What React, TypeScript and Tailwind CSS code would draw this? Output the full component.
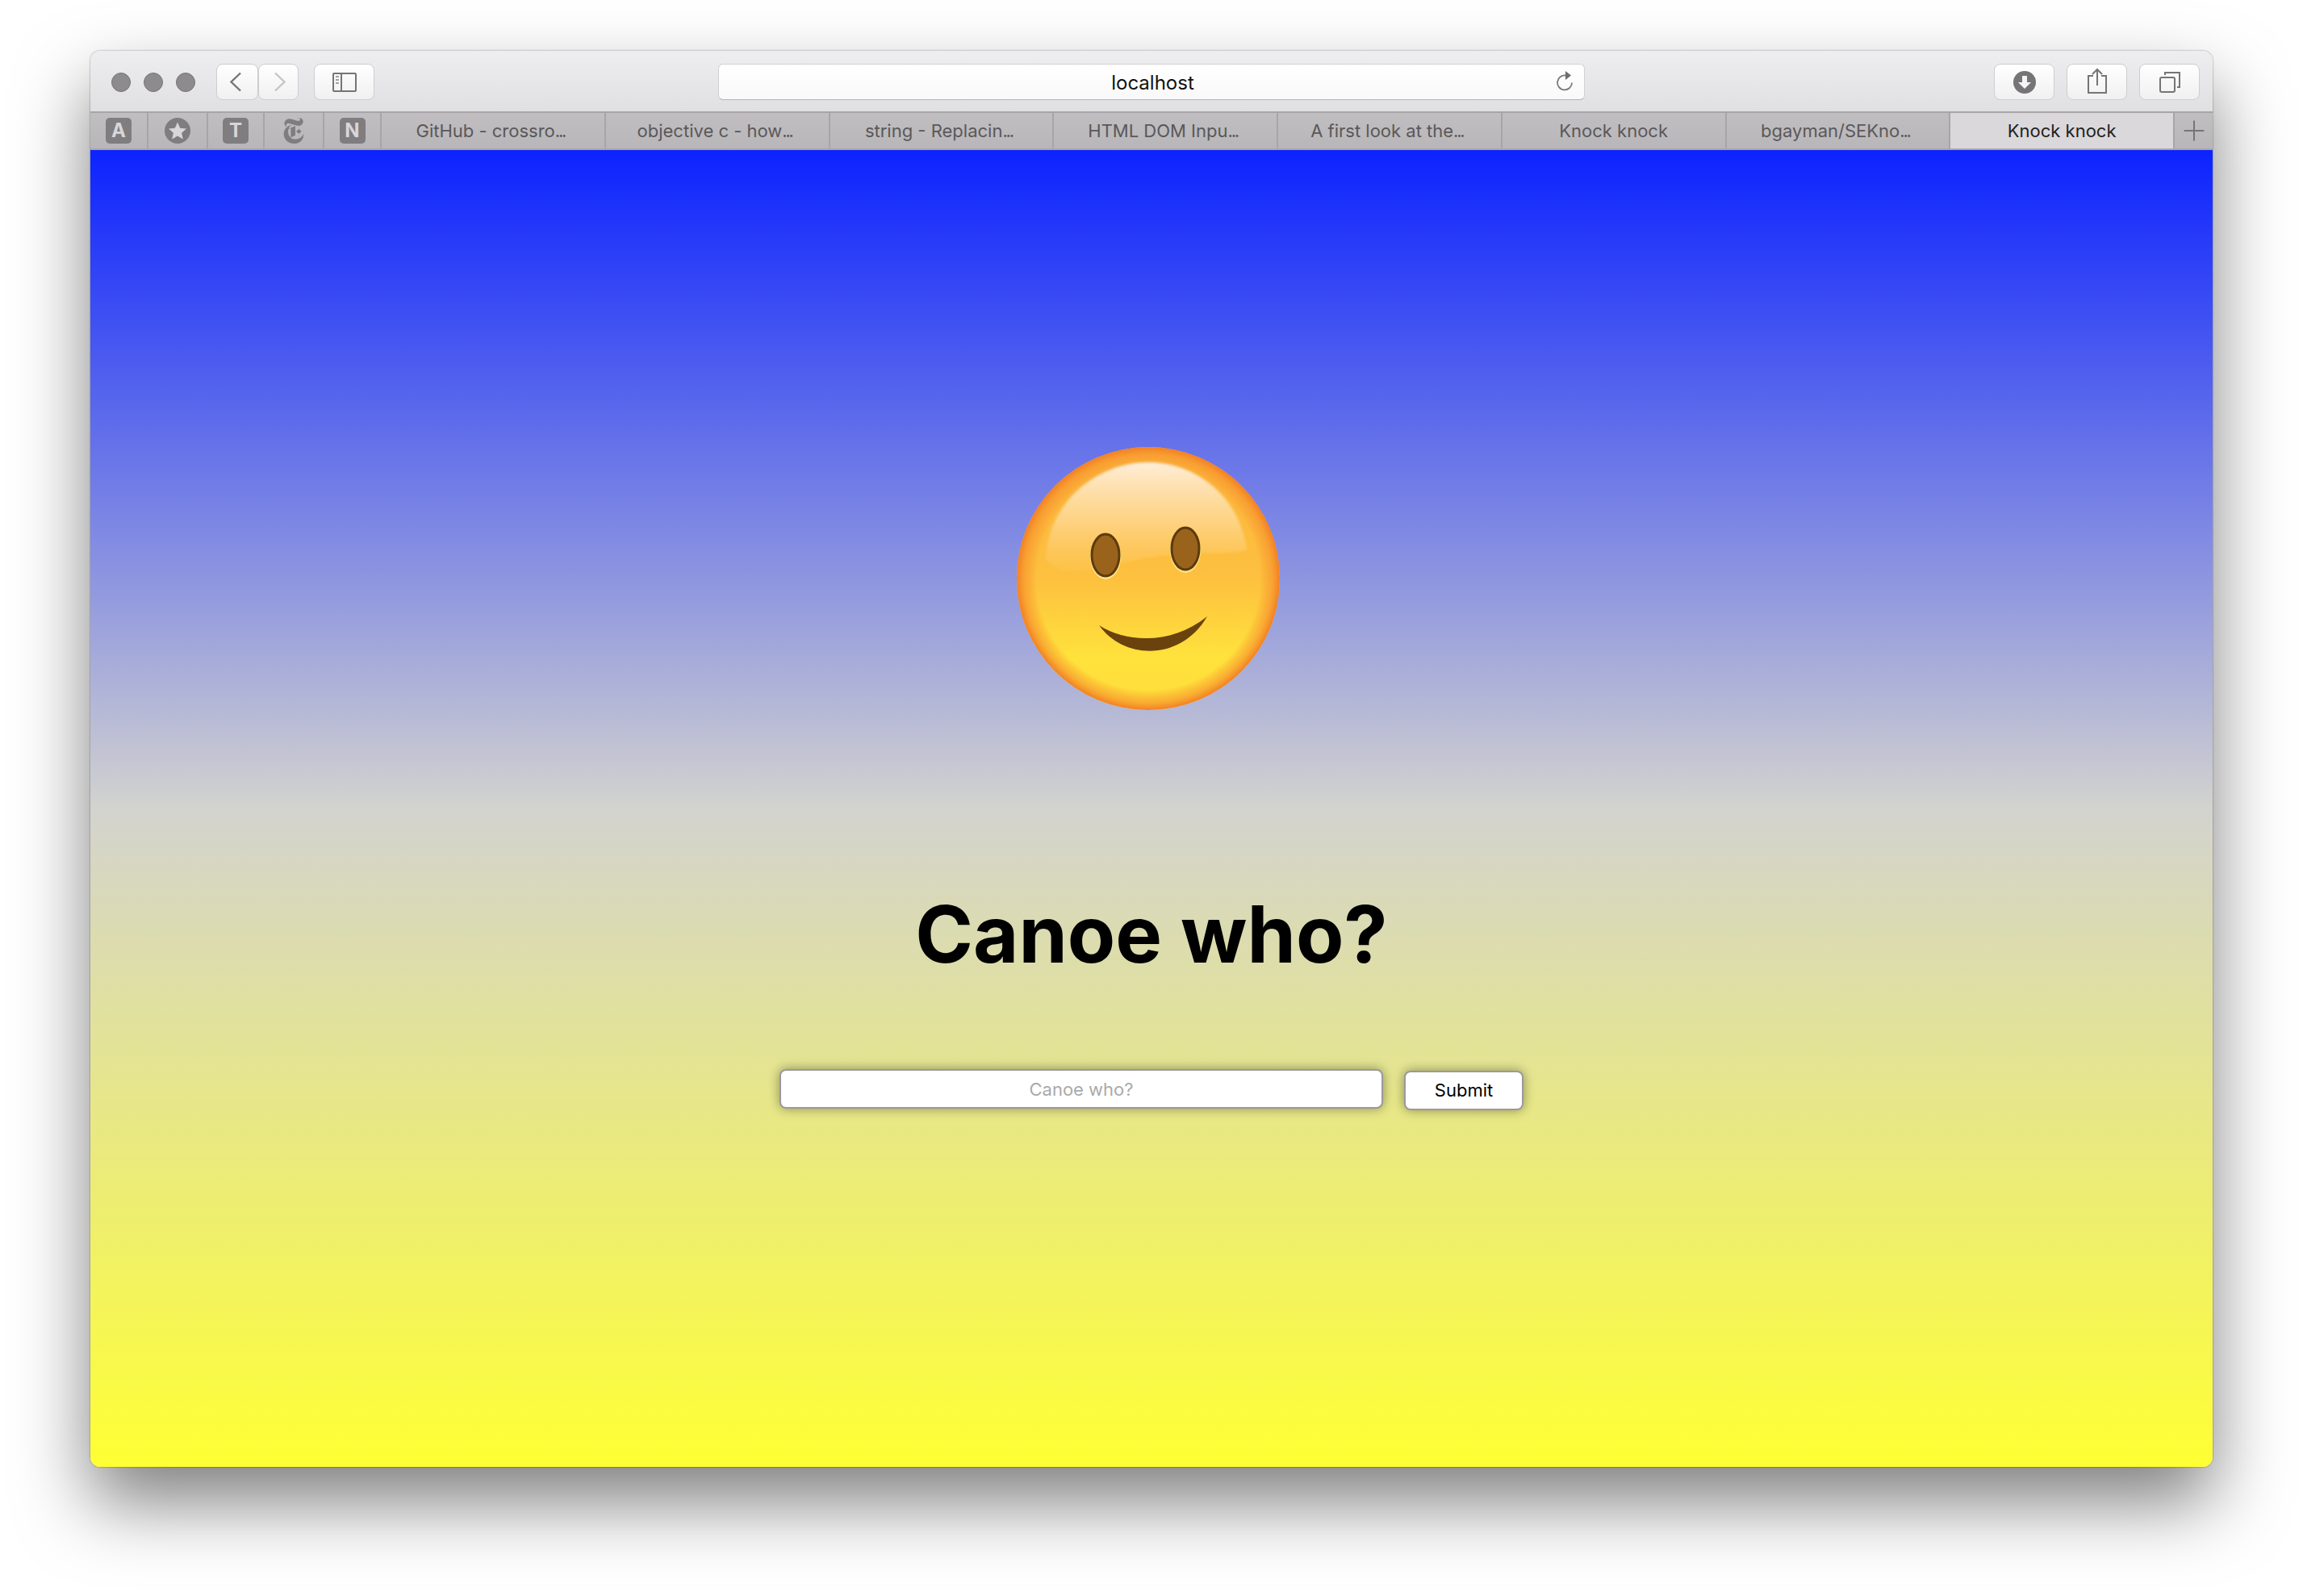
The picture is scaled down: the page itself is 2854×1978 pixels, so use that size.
import { Plus } from 'lucide-react'
import { SiNewyorktimes } from 'react-icons/si'

const tabs = [
  'GitHub - crossro',
  'objective c - how',
  'string - Replacin',
  'HTML DOM Inpu',
  'A first look at the',
  'bgayman/SEKno',
]

function SquareIcon({ letter }: { letter: string }) {
  return (
    <div className="flex h-8 w-8 items-center justify-center rounded-[5px] bg-[#7f7d7f] text-[24px] font-bold text-[#d8d6d8]">
      {letter}
    </div>
  )
}

function ToolButton({ children }: { children: React.ReactNode }) {
  return (
    <div className="flex h-[45px] w-[75px] items-center justify-center rounded-[8px] border border-[#cfcdcf] bg-gradient-to-b from-white to-[#f1f0f1]">
      {children}
    </div>
  )
}

function TitledTab({ title }: { title: string }) {
  return (
    <div className="flex h-full flex-1 items-center justify-center border-r-2 border-[#a7a5a7]">
      <span className="mr-[6px]">
        {title}
        <span className="tracking-[-2.2px]">...</span>
      </span>
    </div>
  )
}

function Smiley() {
  return (
    <svg width="328" height="328" viewBox="0 0 328 328">
      <defs>
        <linearGradient id="face" x1="0" y1="0" x2="0" y2="1">
          <stop offset="0%" stopColor="#fbb53c" />
          <stop offset="50%" stopColor="#fdc03f" />
          <stop offset="80%" stopColor="#ffe23c" />
          <stop offset="100%" stopColor="#ffdc3a" />
        </linearGradient>
        <radialGradient id="rim" cx="50%" cy="50%" r="50%">
          <stop offset="85%" stopColor="#f58426" stopOpacity="0" />
          <stop offset="94%" stopColor="#f6902c" stopOpacity="0.6" />
          <stop offset="100%" stopColor="#f27f24" />
        </radialGradient>
        <linearGradient id="shine" x1="0" y1="0" x2="0" y2="1">
          <stop offset="0%" stopColor="#fff1e0" stopOpacity="0.95" />
          <stop offset="55%" stopColor="#ffe2b0" stopOpacity="0.6" />
          <stop offset="100%" stopColor="#ffd27a" stopOpacity="0.15" />
        </linearGradient>
        <filter id="soft">
          <feGaussianBlur stdDeviation="1.5" />
        </filter>
        <filter id="edge">
          <feGaussianBlur stdDeviation="0.7" />
        </filter>
      </defs>
      <circle cx="164" cy="164" r="163" fill="url(#face)" />
      <circle cx="164" cy="164" r="163" fill="url(#rim)" />
      <path
        d="M37 140 C40 70 100 20 164 20 C225 20 278 65 286 128 C270 136 220 128 164 138 C110 148 60 170 37 140 Z"
        fill="url(#shine)"
        filter="url(#soft)"
      />
      <g filter="url(#edge)">
        <ellipse cx="111" cy="137" rx="19" ry="28" fill="#ffe68a" />
        <ellipse cx="210" cy="129" rx="19" ry="28" fill="#ffe68a" />
        <ellipse cx="111" cy="135" rx="17" ry="26" fill="#9a641c" stroke="#5d3a0c" strokeWidth="3" />
        <ellipse cx="210" cy="127" rx="17" ry="26" fill="#9a641c" stroke="#5d3a0c" strokeWidth="3" />
        <path d="M103 222 C140 245 195 245 237 211 C205 266 135 266 103 222 Z" fill="#6b430f" />
      </g>
    </svg>
  )
}

export default function App() {
  return (
    <div className="h-[1978px] w-[2854px] bg-white px-[112px] pt-[63px] font-['Inter','Liberation_Sans',sans-serif]">
      <div className="flex h-[1755px] w-[2630px] flex-col overflow-hidden rounded-[12px] shadow-[0_44px_90px_rgba(0,0,0,0.5),0_0_2px_rgba(0,0,0,0.5)]">
        {/* Toolbar */}
        <div className="flex h-[75px] shrink-0 items-center bg-gradient-to-b from-[#eeedef] to-[#e0dfe1] pt-[2px] pr-[16px] pl-[26px]">
          <div className="flex gap-4">
            <div className="h-6 w-6 rounded-full border border-[#767476] bg-[#8d8b8e]" />
            <div className="h-6 w-6 rounded-full border border-[#767476] bg-[#8d8b8e]" />
            <div className="h-6 w-6 rounded-full border border-[#767476] bg-[#8d8b8e]" />
          </div>
          <div className="ml-[26px] flex">
            <div className="flex h-[45px] w-[52px] items-center justify-center rounded-[8px] border border-[#cfcdcf] bg-gradient-to-b from-white to-[#f1f0f1] pr-1">
              <svg width="16" height="25" viewBox="0 0 16 25" fill="none" stroke="#767476" strokeWidth="2.4">
                <path d="M14 1.500 2.500 12.500 14 23.500" />
              </svg>
            </div>
            <div className="flex h-[45px] w-[50px] items-center justify-center rounded-[8px] border border-[#cfcdcf] bg-gradient-to-b from-white to-[#f1f0f1] pl-1">
              <svg width="16" height="25" viewBox="0 0 16 25" fill="none" stroke="#c6c4c6" strokeWidth="2.4">
                <path d="M2 1.500 13.500 12.500 2 23.500" />
              </svg>
            </div>
          </div>
          <div className="ml-[19px]">
            <ToolButton>
              <svg width="30" height="24" viewBox="0 0 30 24" fill="none" stroke="#767476" strokeWidth="2">
                <rect x="1" y="1" width="28" height="22" rx="1" />
                <path d="M11 1v22" />
                <path d="M4 5h4M4 9h4M4 13h4" stroke="#a3a1a3" />
              </svg>
            </ToolButton>
          </div>
          <div className="relative ml-[426px] flex h-[45px] w-[1074px] items-center justify-center rounded-[6px] border border-[#d3d1d3] border-b-[#b5b3b5] bg-gradient-to-b from-white to-[#f9f9f9]">
            <span className="mt-[2px] ml-[3px] text-[24px] text-[#111]">localhost</span>
            <svg className="absolute top-[8px] right-[13px]" width="22" height="28" viewBox="0 0 22 28" fill="none">
              <path d="M12.500 5.500A9 9 0 1 0 20 14.500" stroke="#7a787a" strokeWidth="1.800" />
              <path d="M12 0l7 5.500-7 5.500z" fill="#6d6b6d" />
            </svg>
          </div>
          <div className="ml-auto flex gap-[15px]">
            <ToolButton>
              <svg width="28" height="28" viewBox="0 0 28 28">
                <circle cx="14" cy="14" r="14" fill="#767476" />
                <path d="M11 6h6v8h5l-8 8-8-8h5z" fill="#f6f5f6" />
              </svg>
            </ToolButton>
            <ToolButton>
              <svg className="mt-[-4px]" width="24" height="32" viewBox="0 0 24 32" fill="none" stroke="#767476" strokeWidth="2">
                <path d="M7 10H1v21h22V10h-6" />
                <path d="M12 22V2M6 8l6-6 6 6" />
              </svg>
            </ToolButton>
            <ToolButton>
              <svg width="26" height="26" viewBox="0 0 26 26" fill="none" stroke="#767476" strokeWidth="2">
                <rect x="1" y="7" width="18" height="18" rx="2" />
                <path d="M7 4V1h18v18h-3" />
              </svg>
            </ToolButton>
          </div>
        </div>

        {/* Tab bar */}
        <div className="flex h-[48px] shrink-0 border-y-2 border-[#a7a5a7] bg-gradient-to-b from-[#c0bec0] to-[#b8b6b8] text-[22px] text-[#5a585a]">
          <div className="flex h-full w-[72px] shrink-0 items-center justify-center border-r-2 border-[#a7a5a7]">
            <SquareIcon letter="A" />
          </div>
          <div className="flex h-full w-[74px] shrink-0 items-center justify-center border-r-2 border-[#a7a5a7]">
            <div className="flex h-8 w-8 items-center justify-center rounded-full bg-[#7f7d7f]">
              <svg width="24" height="24" viewBox="0 0 24 24" fill="#d8d6d8">
                <path d="M12 1.500l3.200 7.200 7.800.8-5.900 5.200 1.700 7.700-6.800-4-6.800 4 1.700-7.700L1 9.500l7.800-.8z" />
              </svg>
            </div>
          </div>
          <div className="flex h-full w-[70px] shrink-0 items-center justify-center border-r-2 border-[#a7a5a7]">
            <SquareIcon letter="T" />
          </div>
          <div className="flex h-full w-[74px] shrink-0 items-center justify-center border-r-2 border-[#a7a5a7]">
            <SiNewyorktimes size={32} className="text-[#7f7d7f]" />
          </div>
          <div className="flex h-full w-[71px] shrink-0 items-center justify-center border-r-2 border-[#a7a5a7]">
            <SquareIcon letter="N" />
          </div>
          {tabs.slice(0, 5).map((tab) => (
            <TitledTab key={tab} title={tab} />
          ))}
          <div className="flex h-full flex-1 items-center justify-center border-r-2 border-[#a7a5a7]">Knock knock</div>
          <TitledTab title={tabs[5]} />
          <div className="flex h-full flex-1 items-center justify-center border-r-2 border-[#a7a5a7] bg-[#dad8da] text-[#222]">
            Knock knock
          </div>
          <div className="flex h-full w-[47px] shrink-0 items-center justify-center">
            <Plus size={40} strokeWidth={1.2} className="text-[#767476]" />
          </div>
        </div>

        {/* Page */}
        <div className="flex flex-1 flex-col items-center bg-[linear-gradient(#0c23ff,#d3d3cf,#ffff33)]">
          <div className="mt-[367px] ml-[-8px]">
            <Smiley />
          </div>
          <h1 className="mt-[214px] text-[97px] leading-[126px] font-bold text-black">Canoe who?</h1>
          <div className="mt-[104px] flex items-start gap-[26px]">
            <input
              placeholder="Canoe who?"
              className="h-[49px] w-[748px] rounded-[8px] border-2 border-[#9a9a9a] bg-white text-center text-[22px] shadow-[0_0_14px_rgba(0,0,0,0.4)] placeholder:text-[#aaa]"
            />
            <button className="mt-[2px] h-[49px] w-[148px] rounded-[8px] border-2 border-[#9a9a9a] bg-white text-[22px] text-black shadow-[0_0_14px_rgba(0,0,0,0.4)]">
              Submit
            </button>
          </div>
        </div>
      </div>
    </div>
  )
}
